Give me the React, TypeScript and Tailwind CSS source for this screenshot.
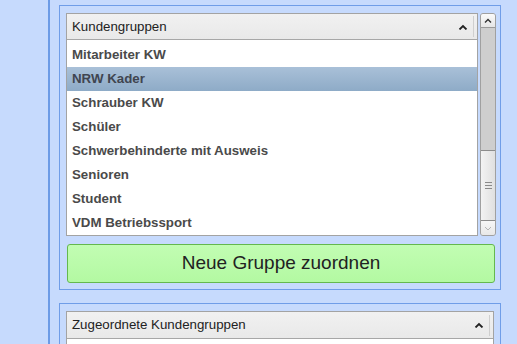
import React from "react";

const rows = [
  "Mitarbeiter KW",
  "NRW Kader",
  "Schrauber KW",
  "Schüler",
  "Schwerbehinderte mit Ausweis",
  "Senioren",
  "Student",
  "VDM Betriebssport",
];

function Chevron() {
  return (
    <svg width="10" height="6" viewBox="0 0 10 6" className="block">
      <polyline points="1.5,5.5 5,2 8.5,5.5" fill="none" stroke="#222" strokeWidth="1.8" />
    </svg>
  );
}

function Header({ title }: { title: string }) {
  return (
    <div className="flex h-[27px] items-center border-b border-[#a7a7a7] bg-gradient-to-b from-[#f1f1f1] to-[#e9e9e9] pl-[5px] text-[13.3px] text-[#222]">
      <span className="flex-1">{title}</span>
      <span className="mr-[5px]">
        <Chevron />
      </span>
      <span className="h-[21px] w-px bg-[#cfcfcf] mr-[3px]" />
    </div>
  );
}

export default function App() {
  return (
    <div
      className="flex h-[344px] w-[517px] overflow-hidden bg-[#c6dafd]"
      style={{ fontFamily: '"Liberation Sans", Arial, sans-serif' }}
    >
      <div className="w-[48px] shrink-0" />
      <div className="w-[2px] shrink-0 bg-[#6c9be6]" />
      <div className="w-[9px] shrink-0" />
      <div className="flex w-[442px] shrink-0 flex-col pt-[5px]">
        {/* Panel 1 */}
        <div className="border border-[#6f9de8] pl-[6px] pr-[4px] pt-[7px] pb-[6px]">
          <div className="flex gap-[2px]">
            <div className="flex h-[223px] w-[412px] flex-col overflow-hidden border border-[#a3a3a3] bg-white">
              <Header title="Kundengruppen" />
              <div className="pt-[3px]">
                {rows.map((r, i) => (
                  <div
                    key={r}
                    className={
                      "flex h-[24px] items-center pl-[5px] text-[13.3px] font-bold " +
                      (i === 1
                        ? "bg-gradient-to-b from-[#a9c0d8] to-[#8eabc7] text-[#404550]"
                        : "text-[#4a4a4a]")
                    }
                  >
                    {r}
                  </div>
                ))}
              </div>
            </div>
            {/* Scrollbar */}
            <div className="flex h-[223px] w-[16px] flex-col overflow-hidden rounded-[3px] border border-[#a0a0a0] bg-[#cecece]">
              <div className="flex h-[14px] shrink-0 items-center justify-center border-b border-[#9a9a9a] bg-gradient-to-b from-[#fafafa] to-[#e6e6e6]">
                <svg width="8" height="5" viewBox="0 0 8 5">
                  <polyline points="1,4.5 4,1.5 7,4.5" fill="none" stroke="#333" strokeWidth="1.4" />
                </svg>
              </div>
              <div className="h-[122px] shrink-0" />
              <div className="flex h-[71px] shrink-0 flex-col items-center justify-center gap-[2px] border-y border-[#8c8c8c] bg-gradient-to-r from-[#f3f3f3] to-[#e0e0e0]">
                <div className="h-px w-[7px] bg-[#8a8a8a]" />
                <div className="h-px w-[7px] bg-[#8a8a8a]" />
                <div className="h-px w-[7px] bg-[#8a8a8a]" />
              </div>
              <div className="flex flex-1 items-center justify-center bg-gradient-to-b from-[#f7f7f7] to-[#e8e8e8]">
                <svg width="8" height="5" viewBox="0 0 8 5">
                  <polyline points="1,1 4,4 7,1" fill="none" stroke="#b5b5b5" strokeWidth="1" />
                </svg>
              </div>
            </div>
          </div>
          <div className="mt-[8px] pl-px pr-px">
            <button className="flex h-[39px] w-[428px] items-center justify-center rounded-[3px] border border-[#64b84e] bg-gradient-to-b from-[#c2fdb3] to-[#b3f9a2] text-[19px] text-[#222]">
              Neue Gruppe zuordnen
            </button>
          </div>
        </div>
        {/* Panel 2 */}
        <div className="mt-[13px] border border-[#6f9de8] pl-[6px] pr-[6px] pt-[7px] h-[60px]">
          <div className="w-[428px] border border-[#a3a3a3] bg-white h-[60px]">
            <Header title="Zugeordnete Kundengruppen" />
          </div>
        </div>
      </div>
    </div>
  );
}
